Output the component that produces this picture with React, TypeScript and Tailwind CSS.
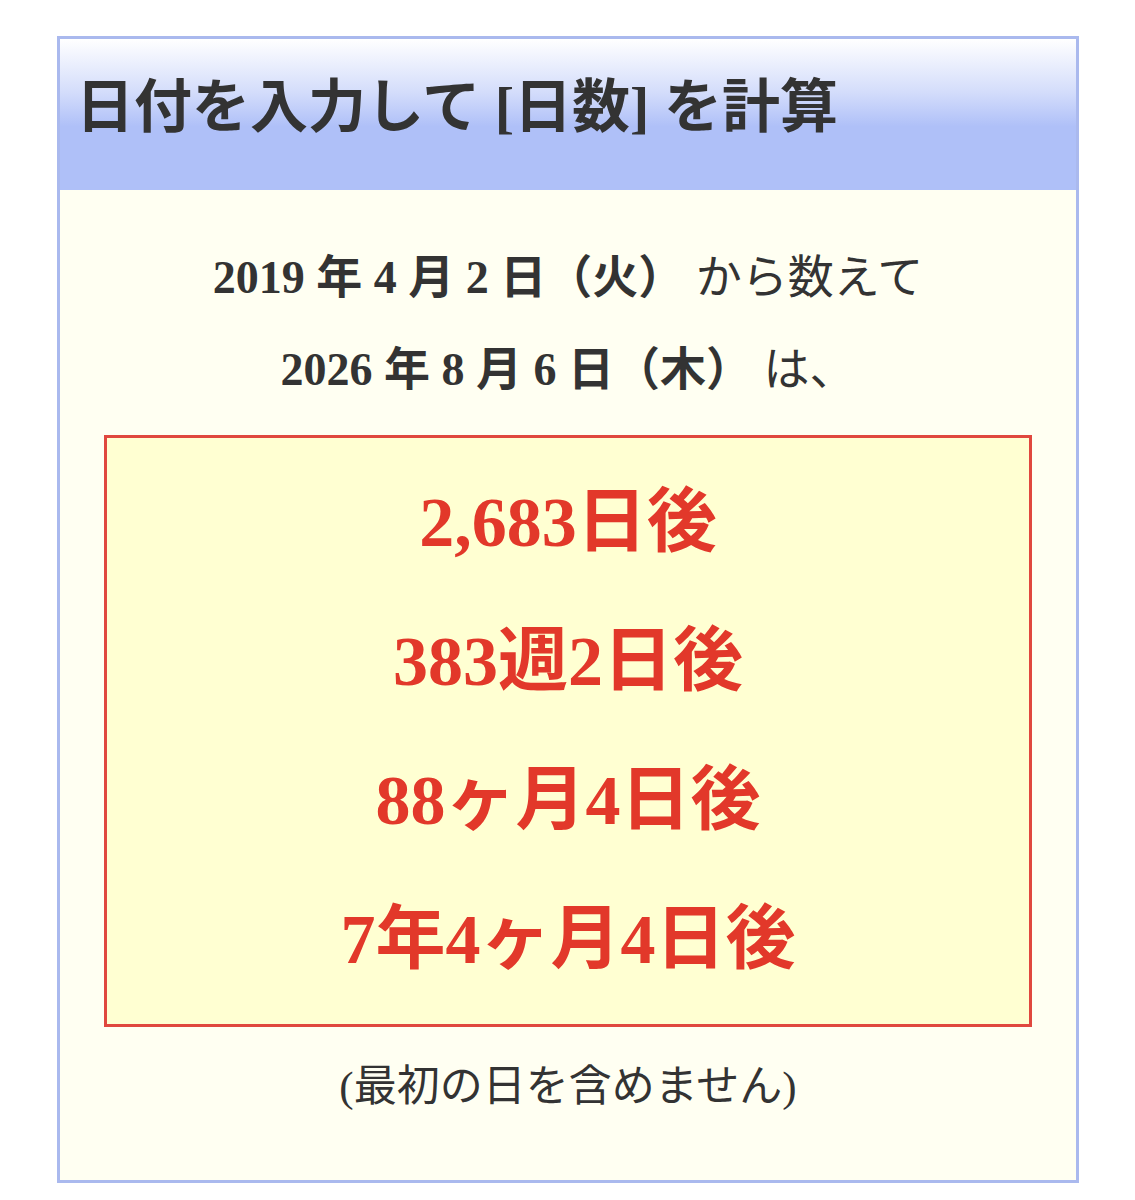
const serif = "font-['Liberation_Serif','Noto_Sans_CJK_JP',serif]"

export default function App() {
  const results = ['2,683日後', '383週2日後', '88ヶ月4日後', '7年4ヶ月4日後']

  return (
    <div className={`min-h-[1200px] bg-white pt-[36px] ${serif}`}>
      <div className="ml-[57px] w-[1022px] border-[3px] border-[#aab9ee] bg-[#fffff2]">
        {/* header */}
        <div className="flex h-[151px] items-center bg-[linear-gradient(to_bottom,#ffffff_0%,#d4ddfb_35%,#afc0f8_58%,#afc0f8_100%)] pb-[14px] pl-[16px]">
          <h1 className="text-[58px] font-bold leading-none text-[#333333]">
            日付を入力して [日数] を計算
          </h1>
        </div>

        {/* body */}
        <div className="px-[44px] pt-[42px] text-center text-[#333333]">
          <p className="text-[46px] leading-[92px]">
            <span className="font-bold">2019 年 4 月 2 日（火）</span> から数えて
          </p>
          <p className="text-[46px] leading-[92px]">
            <span className="font-bold">2026 年 8 月 6 日（木）</span> は、
          </p>

          <div className="mt-[19px] border-[3px] border-[#e0483e] bg-[#ffffd2] py-[15px]">
            {results.map((r, i) => (
              <p key={i} className="text-[70px] font-bold leading-[139px] text-[#e2382a]">
                {r}
              </p>
            ))}
          </div>

          <p className="pt-[30px] pb-[63px] text-[43px] leading-[60px]">
            (最初の日を含めません)
          </p>
        </div>
      </div>
    </div>
  )
}
